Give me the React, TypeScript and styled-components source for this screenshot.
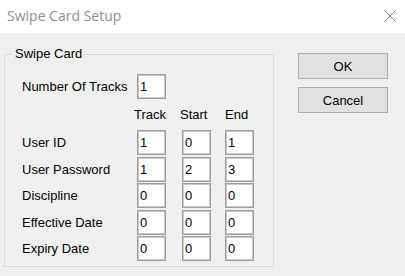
import React from "react";
import styled, { createGlobalStyle } from "styled-components";

const GlobalStyle = createGlobalStyle`
  html, body {
    margin: 0;
    padding: 0;
    background: #f0f0f0;
  }
  body {
    font-family: "Liberation Sans", Arial, sans-serif;
    font-size: 13px;
    color: #000;
  }
  * {
    box-sizing: border-box;
  }
`;

const Window = styled.div`
  width: 405px;
  height: 276px;
  background: #f0f0f0;
  overflow: hidden;
`;

const TitleBar = styled.div`
  height: 33px;
  background: #fff;
  display: flex;
  align-items: center;
  justify-content: space-between;
  padding: 0 9px 0 7px;
`;

const Title = styled.span`
  font-family: "Open Sans", "Noto Sans", sans-serif;
  font-size: 14px;
  color: #8f8f8f;
  margin-top: -2px;
`;

const CloseIcon = styled.svg`
  width: 12px;
  height: 12px;
  margin-top: -2px;
`;

const Body = styled.div`
  display: flex;
  align-items: flex-start;
  padding-left: 4px;
`;

const GroupBox = styled.fieldset`
  width: 270px;
  margin: 13px 0 0;
  padding: 0;
  border: 1px solid #dcdcdc;
`;

const GroupLegend = styled.legend`
  margin-left: 8px;
  padding: 0 2px;
  line-height: 16px;
  font-size: 13px;
`;

const GroupContent = styled.div`
  padding: 12px 0 5px 17px;
`;

const Row = styled.div<{ $top?: number; $height?: number }>`
  display: grid;
  grid-template-columns: 115px 45px 43px 29px;
  align-items: center;
  height: ${(p) => p.$height ?? 25}px;
  margin-top: ${(p) => p.$top ?? 0}px;
  line-height: 15px;
`;

const Label = styled.span`
  white-space: nowrap;
`;

const ColumnHeader = styled.span<{ $shift: number }>`
  margin-left: ${(p) => p.$shift}px;
  white-space: nowrap;
`;

const TextBox = styled.input`
  width: 29px;
  height: 25px;
  margin: 0;
  padding: 0 0 0 2px;
  border: 1px solid #9d9d9d;
  box-shadow: inset 0 0 0 1px #c9c9c9;
  background: #fff;
  font-family: "Liberation Sans", Arial, sans-serif;
  font-size: 13px;
  color: #000;
  outline: none;
`;

const ButtonColumn = styled.div`
  display: flex;
  flex-direction: column;
  gap: 8px;
  margin: 20px 0 0 24px;
`;

const DialogButton = styled.button`
  width: 90px;
  height: 26px;
  margin: 0;
  padding: 0;
  background: #e1e1e1;
  border: 1px solid #adadad;
  font-family: "Liberation Sans", Arial, sans-serif;
  font-size: 13px;
  color: #000;
`;

type Field = {
  label: string;
  track: string;
  start: string;
  end: string;
};

const fields: Field[] = [
  { label: "User ID", track: "1", start: "0", end: "1" },
  { label: "User Password", track: "1", start: "2", end: "3" },
  { label: "Discipline", track: "0", start: "0", end: "0" },
  { label: "Effective Date", track: "0", start: "0", end: "0" },
  { label: "Expiry Date", track: "0", start: "0", end: "0" },
];

const App = () => (
  <Window>
    <GlobalStyle />
    <TitleBar>
      <Title>Swipe Card Setup</Title>
      <CloseIcon viewBox="0 0 12 12">
        <path d="M0.5 0.5 L11.5 11.5 M11.5 0.5 L0.5 11.5" stroke="#8a8a8a" strokeWidth="1" fill="none" />
      </CloseIcon>
    </TitleBar>
    <Body>
      <GroupBox>
        <GroupLegend>Swipe Card</GroupLegend>
        <GroupContent>
          <Row>
            <Label>Number Of Tracks</Label>
            <TextBox defaultValue="1" />
          </Row>
          <Row $top={8} $height={15}>
            <span />
            <ColumnHeader $shift={-3}>Track</ColumnHeader>
            <ColumnHeader $shift={-2}>Start</ColumnHeader>
            <ColumnHeader $shift={0}>End</ColumnHeader>
          </Row>
          {fields.map((f, i) => (
            <Row key={f.label} $top={i === 0 ? 8 : 1.5}>
              <Label>{f.label}</Label>
              <TextBox defaultValue={f.track} />
              <TextBox defaultValue={f.start} />
              <TextBox defaultValue={f.end} />
            </Row>
          ))}
        </GroupContent>
      </GroupBox>
      <ButtonColumn>
        <DialogButton>OK</DialogButton>
        <DialogButton>Cancel</DialogButton>
      </ButtonColumn>
    </Body>
  </Window>
);

export default App;
